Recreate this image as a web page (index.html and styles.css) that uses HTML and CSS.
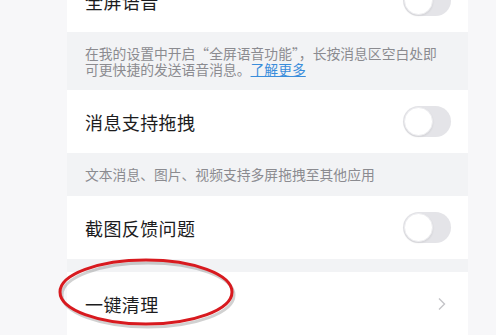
FILE: index.html
```html
<!DOCTYPE html>
<html lang="zh-CN">
<head>
<meta charset="utf-8">
<link rel="stylesheet" href="styles.css">
</head>
<body>
<div class="page">
  <div class="panel">
    <div class="row first">
      <span class="title">全屏语音</span>
      <span class="toggle"><span class="knob"></span></span>
    </div>
    <div class="desc two">在我的设置中开启“全屏语音功能”，长按消息区空白处即可更快捷的发送语音消息。<a class="link">了解更多</a></div>
    <div class="row">
      <span class="title">消息支持拖拽</span>
      <span class="toggle"><span class="knob"></span></span>
    </div>
    <div class="desc">文本消息、图片、视频支持多屏拖拽至其他应用</div>
    <div class="row">
      <span class="title">截图反馈问题</span>
      <span class="toggle"><span class="knob"></span></span>
    </div>
    <div class="gap"></div>
    <div class="row last">
      <span class="title">一键清理</span>
      <svg class="chev" width="10" height="14" viewBox="0 0 10 14"><path d="M2 1.5 L7.5 7 L2 12.5" fill="none" stroke="#c4c4c8" stroke-width="1.4"/></svg>
    </div>
  </div>
  <svg class="ring" width="200" height="90" viewBox="0 0 200 90">
    <ellipse cx="90" cy="38" rx="86" ry="32" fill="none" stroke="rgba(0,0,0,0.18)" stroke-width="3" transform="translate(2 3)"/>
    <ellipse cx="90" cy="38" rx="86" ry="32" fill="none" stroke="#d81a1f" stroke-width="3"/>
  </svg>
</div>
</body>
</html>
```
FILE: styles.css
```css
* { box-sizing: border-box; }
html, body { margin: 0; padding: 0; }
body {
  background: #f7f7f9;
  font-family: "Noto Sans CJK SC", "Noto Sans", sans-serif;
  width: 496px;
  height: 335px;
  overflow: hidden;
}
.page {
  position: relative;
  display: flow-root;
  padding: 0 28px 0 67px;
}
.panel {
  background: #f2f3f5;
  margin-top: -31px;
  display: flex;
  flex-direction: column;
}
.row {
  background: #fff;
  height: 63px;
  display: flex;
  align-items: center;
  justify-content: space-between;
  padding: 0 17px 0 18px;
}
.row.last { height: 70px; padding-right: 21px; padding-bottom: 6px; }
.title {
  font-size: 18px;
  color: #1c1c1e;
  letter-spacing: 0.4px;
}
.toggle {
  width: 48px;
  height: 31px;
  border-radius: 16px;
  background: #e4e4e8;
  display: flex;
  align-items: center;
  padding-left: 1px;
}
.knob {
  width: 29px;
  height: 29px;
  border-radius: 50%;
  background: #fff;
  border: 1px solid #ececef;
  box-shadow: 0 1px 2px rgba(0,0,0,0.08);
}
.desc {
  padding: 13px 18px 14px;
  font-size: 13.8px;
  line-height: 16px;
  color: #8b8b90;
}
.desc.two { padding-top: 13px; padding-bottom: 13px; }
.link {
  color: #3a8ddb;
  text-decoration: underline;
}
.gap { height: 13px; }
.ring {
  position: absolute;
  left: 56px;
  top: 254px;
}
```
